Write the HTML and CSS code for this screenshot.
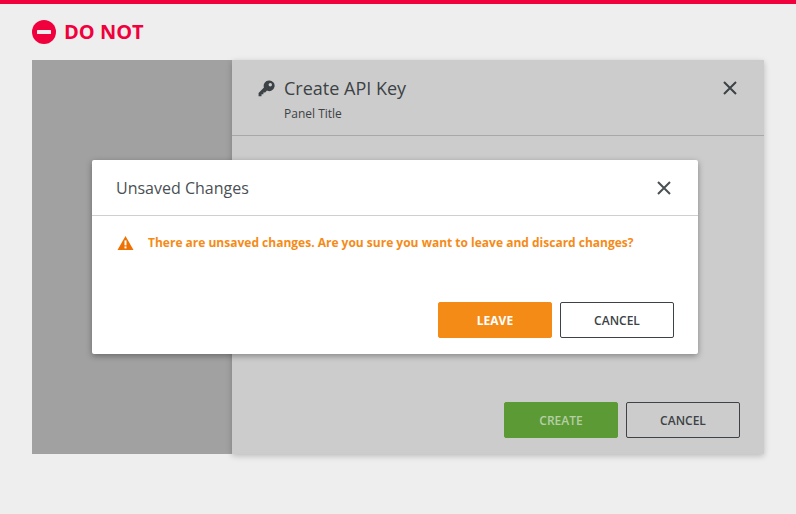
FILE: index.html
```html
<!DOCTYPE html>
<html lang="en">
<head>
<meta charset="utf-8">
<title>Do not</title>
<link rel="stylesheet" href="styles.css">
</head>
<body>
<div class="topbar"></div>
<main class="page">
  <h1 class="verdict">
    <svg class="verdict-icon" viewBox="0 0 24 24" aria-hidden="true"><circle cx="12" cy="12" r="12" fill="#f0003c"/><rect x="5" y="10" width="14" height="4" rx="0.5" fill="#eeeeee"/></svg>
    <span>DO NOT</span>
  </h1>
  <div class="stage">
    <div class="backdrop"></div>
    <section class="panel">
      <header class="panel-head">
        <svg class="key-icon" viewBox="0 0 18 18" aria-hidden="true"><path fill="#3c4245" d="M11.6 0.6a5.6 5.6 0 0 0-5.3 7.4L0.6 13.7V17.2h3.1v-2h2v-2h1.9l1.9-2a5.6 5.6 0 1 0 2.1-10.6zm1.4 2.7a1.8 1.8 0 1 1 0 3.6 1.8 1.8 0 0 1 0-3.6z"/></svg>
        <div class="panel-titles">
          <div class="panel-title">Create API Key</div>
          <div class="panel-sub">Panel Title</div>
        </div>
        <svg class="close-icon" viewBox="0 0 14 14" aria-hidden="true"><path d="M1 1L13 13M13 1L1 13" stroke="#3c4245" stroke-width="2" fill="none"/></svg>
      </header>
      <div class="panel-body"></div>
      <footer class="actions panel-actions">
        <button class="btn btn-create">CREATE</button>
        <button class="btn btn-outline">CANCEL</button>
      </footer>
    </section>
    <section class="modal">
      <header class="modal-head">
        <div class="modal-title">Unsaved Changes</div>
        <svg class="close-icon" viewBox="0 0 14 14" aria-hidden="true"><path d="M1 1L13 13M13 1L1 13" stroke="#4a5054" stroke-width="2" fill="none"/></svg>
      </header>
      <div class="modal-body">
        <svg class="warn-icon" viewBox="0 0 16 14" aria-hidden="true"><path fill="#ee7203" d="M8 0L16 14H0z"/><rect x="7" y="4.4" width="2" height="5" fill="#fff"/><rect x="7" y="10.4" width="2" height="2" fill="#fff"/></svg>
        <p class="warn-text">There are unsaved changes. Are you sure you want to leave and discard changes?</p>
      </div>
      <footer class="actions modal-actions">
        <button class="btn btn-leave">LEAVE</button>
        <button class="btn btn-outline btn-outline-light">CANCEL</button>
      </footer>
    </section>
  </div>
</main>
</body>
</html>
```
FILE: styles.css
```css
* { box-sizing: border-box; }
html, body { margin: 0; height: 100%; }
body {
  background: #eeeeee;
  font-family: "Open Sans", "Liberation Sans", sans-serif;
  color: #3c4245;
  overflow: hidden;
}
.topbar { height: 4px; background: #f0003c; }
.page { padding: 16px 32px 0; }
.verdict {
  display: flex;
  align-items: center;
  gap: 8px;
  height: 24px;
  margin: 0 0 16px;
  font-size: 20px;
  font-weight: 700;
  line-height: 24px;
  color: #f0003c;
}
.verdict-icon { width: 24px; height: 24px; flex: none; }
.stage { position: relative; display: flex; height: 394px; }
.backdrop { width: 200px; flex: none; background: #a1a1a1; }
.panel {
  flex: 1;
  display: flex;
  flex-direction: column;
  background: #cccccc;
  box-shadow: 0 2px 6px rgba(0, 0, 0, 0.22);
}
.panel-head {
  display: flex;
  align-items: flex-start;
  height: 76px;
  padding: 16px 27px 0 26px;
  border-bottom: 1px solid #a8a8a8;
}
.key-icon { width: 17px; height: 17px; margin-top: 4px; flex: none; }
.panel-titles { flex: 1; margin-left: 9px; }
.panel-title { font-size: 18px; line-height: 24px; }
.panel-sub { margin-top: 5px; font-size: 12px; line-height: 18px; }
.panel-head .close-icon { margin-top: 5px; }
.close-icon { width: 14px; height: 14px; flex: none; }
.panel-body { flex: 1; }
.actions { display: flex; justify-content: flex-end; gap: 8px; }
.panel-actions { padding: 0 24px 16px; }
.btn {
  width: 114px;
  height: 36px;
  padding: 0;
  border-radius: 2px;
  border: 1px solid transparent;
  font-family: inherit;
  font-size: 12px;
  font-weight: 600;
  color: #3c4245;
  background: transparent;
}
.btn-create { background: #5c9a36; border-color: #5c9a36; color: #b5cfa5; }
.btn-leave { background: #f58b17; border-color: #f58b17; color: #ffffff; font-weight: 700; }
.btn-outline { border-color: #3c4245; }
.btn-outline-light { background: #ffffff; }
.modal {
  position: absolute;
  left: 60px;
  top: 100px;
  width: 606px;
  height: 194px;
  background: #ffffff;
  border-radius: 2px;
  box-shadow: 0 2px 6px rgba(0, 0, 0, 0.35);
}
.modal-head {
  display: flex;
  align-items: center;
  justify-content: space-between;
  height: 56px;
  padding: 0 27px 0 24px;
  border-bottom: 1px solid #cfcfcf;
}
.modal-title { font-size: 16px; line-height: 24px; color: #4a5054; }
.modal-body { display: flex; gap: 14px; height: 86px; padding: 17px 24px 0 25px; }
.warn-icon { width: 17px; height: 14px; margin-top: 3px; flex: none; }
.warn-text {
  margin: 0;
  font-size: 12px;
  line-height: 20px;
  font-weight: 700;
  color: #f58b17;
}
.modal-actions { padding: 0 24px; }
```
